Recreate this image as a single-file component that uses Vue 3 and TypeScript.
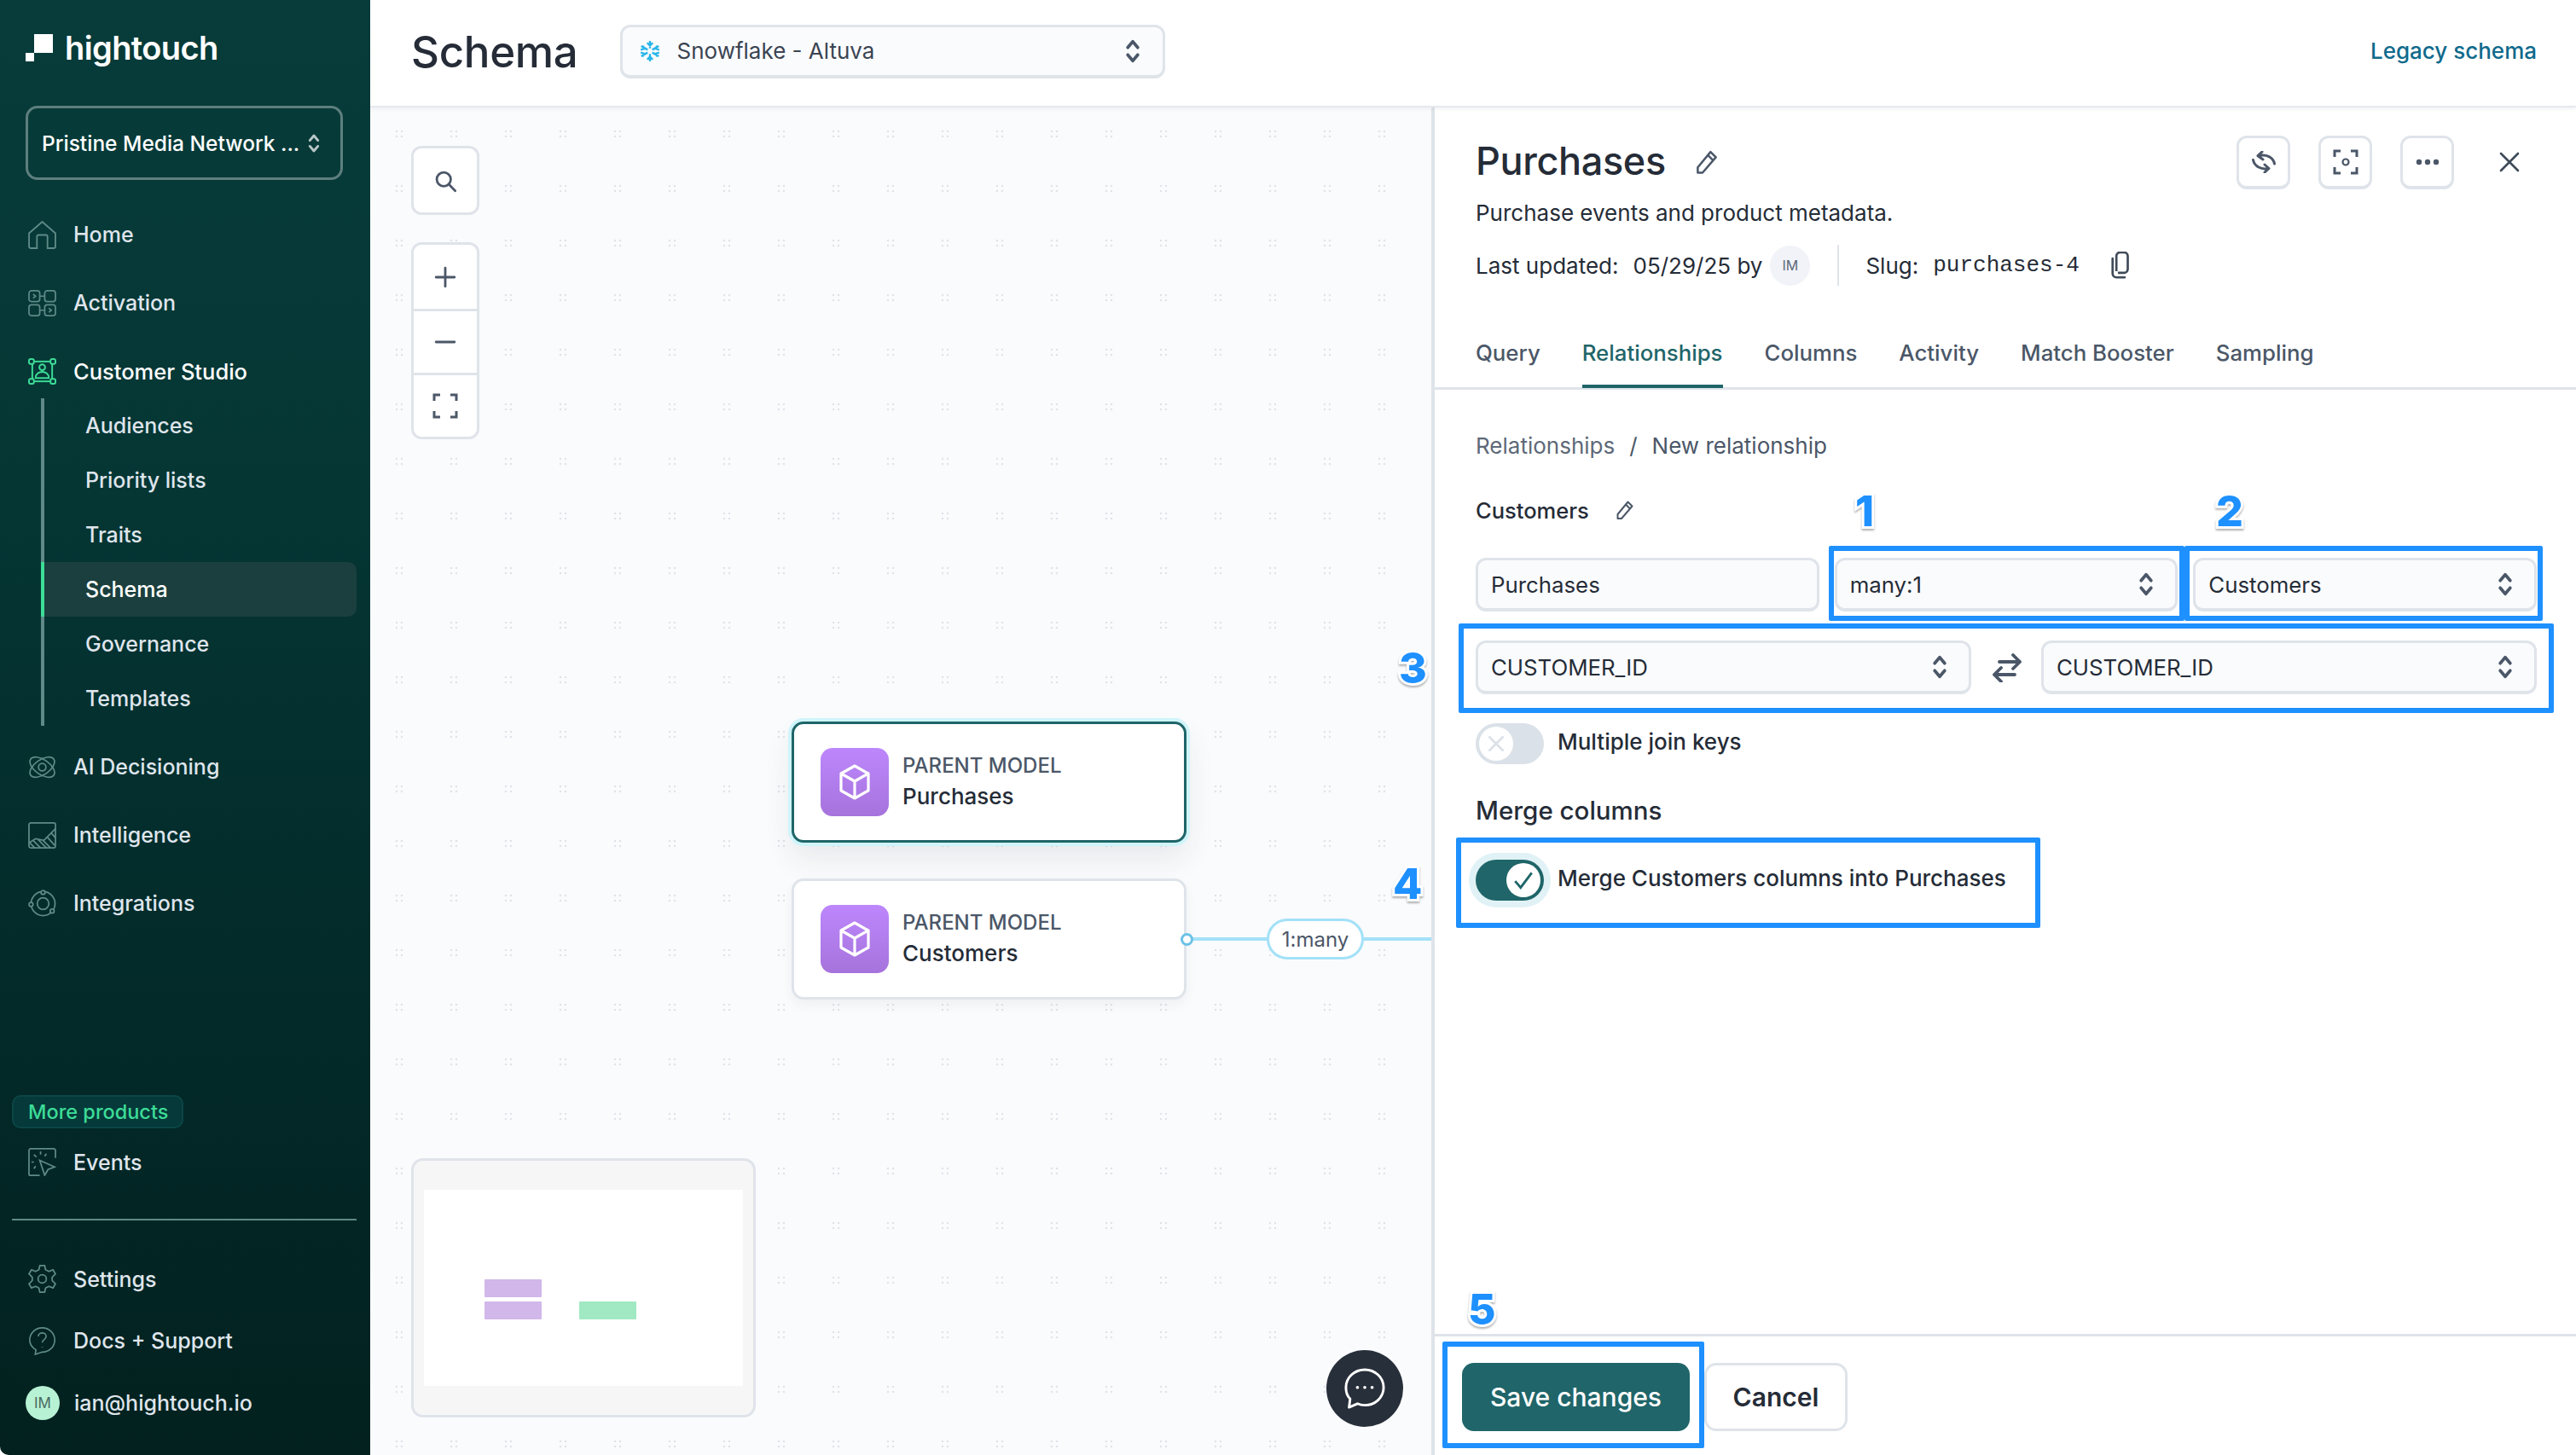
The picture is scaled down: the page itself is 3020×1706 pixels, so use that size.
<script setup lang="ts">
interface NavItem { label: string; icon: string; active?: boolean }
const topNav: NavItem[] = [
  { label: 'Home', icon: 'i-home' },
  { label: 'Activation', icon: 'i-activation' },
  { label: 'Customer Studio', icon: 'i-studio', active: true },
]
const subNav = ['Audiences', 'Priority lists', 'Traits', 'Schema', 'Governance', 'Templates']
const midNav: NavItem[] = [
  { label: 'AI Decisioning', icon: 'i-ai' },
  { label: 'Intelligence', icon: 'i-intel' },
  { label: 'Integrations', icon: 'i-integr' },
]
const tabs = ['Query', 'Relationships', 'Columns', 'Activity', 'Match Booster', 'Sampling']
const nodes = [
  { name: 'Purchases', cls: 'node-a' },
  { name: 'Customers', cls: 'node-b' },
]
const marks = [
  { text: '1', cls: 'm1' },
  { text: '2', cls: 'm2' },
  { text: '3', cls: 'm3' },
  { text: '4', cls: 'm4' },
  { text: '5', cls: 'm5' },
]
const boxes = ['b1', 'b2', 'b3', 'b4', 'b5']
</script>

<template>
  <div class="app">
    <svg class="defs" width="0" height="0" aria-hidden="true">
      <symbol id="updown" viewBox="0 0 16 28"><path d="M2.500 10 8 3.500 13.500 10M2.500 18 8 24.500 13.500 18" fill="none" stroke="currentColor" stroke-width="3.400" stroke-linecap="round" stroke-linejoin="round"/></symbol>
      <symbol id="pencil" viewBox="0 0 24 24"><path d="M15.500 2.500 20.500 7.500 8 22H3.500v-5zM13 5.500l5 5" fill="none" stroke="currentColor" stroke-width="2" stroke-linejoin="round"/></symbol>
      <symbol id="cube" viewBox="0 0 40 44"><path d="M20 3 36 12V32L20 41 4 32V12ZM4 12 20 21 36 12M20 21V41" fill="none" stroke="#fff" stroke-width="3.200" stroke-linejoin="round"/></symbol>
      <symbol id="i-home" viewBox="0 0 32 32"><path d="M1 14 16 1l15 13v15a2 2 0 0 1-2 2h-7V18a2 2 0 0 0-2-2h-8a2 2 0 0 0-2 2v13H3a2 2 0 0 1-2-2Z"/></symbol>
      <symbol id="i-activation" viewBox="0 0 34 32"><rect x="1" y="1" width="13" height="13" rx="3"/><rect x="20" y="1" width="13" height="13" rx="3"/><rect x="1" y="18" width="13" height="13" rx="3"/><rect x="20" y="18" width="13" height="13" rx="3"/><path d="M14 7.500h6M14 24.500h6M6 5l3 2.500L6 10M25 22l3 2.500-3 2.500"/></symbol>
      <symbol id="i-studio" viewBox="0 0 34 32"><rect x="5" y="4" width="24" height="24"/><rect x="1" y="1" width="6" height="6" rx="2" fill="#053a38"/><rect x="27" y="1" width="6" height="6" rx="2" fill="#053a38"/><rect x="1" y="25" width="6" height="6" rx="2" fill="#053a38"/><rect x="27" y="25" width="6" height="6" rx="2" fill="#053a38"/><circle cx="17" cy="11" r="3.500"/><path d="M9 24c0-10 16-10 16 0Z"/></symbol>
      <symbol id="i-ai" viewBox="0 0 34 32"><ellipse cx="17" cy="16" rx="17" ry="9" transform="rotate(35 17 16)"/><ellipse cx="17" cy="16" rx="17" ry="9" transform="rotate(-35 17 16)"/><circle cx="17" cy="16" r="4.500"/></symbol>
      <symbol id="i-intel" viewBox="0 0 34 32"><rect x="1" y="1" width="32" height="30" rx="2"/><path d="M1 25 9 20l10 2L33 8M2 25l6 6M6 22l9 9M12 21l10 10M18 22l9 9M23 18l9 10M28 13l5 6"/></symbol>
      <symbol id="i-integr" viewBox="0 0 34 32"><circle cx="18" cy="16" r="14.500"/><circle cx="18" cy="16" r="7"/><circle cx="18" cy="2.500" r="2.400" fill="#032c2b"/><circle cx="3.500" cy="17" r="2.400" fill="#032c2b"/><circle cx="29" cy="25" r="2.400" fill="#032c2b"/></symbol>
      <symbol id="i-events" viewBox="0 0 34 34"><path d="M33 12V3a2 2 0 0 0-2-2H3a2 2 0 0 0-2 2v29a1 1 0 0 0 1 1h12"/><path d="M14 15 32 23l-8 3-4 7ZM15 4v4M7 8l3 3M22 7l-2 3M4 17h3M7 25l2-3"/></symbol>
      <symbol id="i-gear" viewBox="0 0 34 34"><circle cx="17" cy="17" r="5"/><path d="M14 1h6l1 5 4 2 5-2 3 5-4 4v4l4 4-3 5-5-2-4 2-1 5h-6l-1-5-4-2-5 2-3-5 4-4v-4l-4-4 3-5 5 2 4-2Z" stroke-linejoin="round"/></symbol>
      <symbol id="i-docs" viewBox="0 0 34 36"><path d="M17 1c9 0 16 7 16 15.500S26 32 17 32l-9 3 1-6C4 26 1 22 1 16.500 1 8 8 1 17 1Z"/><path d="M12 12c0-6 10-6 10 0 0 4-5 4-5 8M17 25v1"/></symbol>
    </svg>

    <aside class="sidebar">
      <div class="logo">
        <span class="logo-mark"><i class="sq-big"></i><i class="sq-small"></i></span>
        <span class="logo-text">hightouch</span>
      </div>
      <div class="org">
        <span>Pristine Media Network ...</span>
        <svg class="org-chev"><use href="#updown" /></svg>
      </div>
      <nav class="nav">
        <div v-for="n in topNav" :key="n.label" class="nav-item" :class="{ on: n.active }">
          <svg class="nav-ic"><use :href="'#' + n.icon" /></svg>
          <span>{{ n.label }}</span>
        </div>
        <div class="sub">
          <div v-for="s in subNav" :key="s" class="sub-item" :class="{ on: s === 'Schema' }">{{ s }}</div>
        </div>
        <div class="mid">
          <div v-for="n in midNav" :key="n.label" class="nav-item">
            <svg class="nav-ic"><use :href="'#' + n.icon" /></svg>
            <span>{{ n.label }}</span>
          </div>
        </div>
      </nav>
      <div class="side-bottom">
        <div class="chip">More products</div>
        <div class="nav-item">
          <svg class="nav-ic"><use href="#i-events" /></svg>
          <span>Events</span>
        </div>
        <div class="side-rule"></div>
        <div class="nav-item short">
          <svg class="nav-ic"><use href="#i-gear" /></svg>
          <span>Settings</span>
        </div>
        <div class="nav-item short">
          <svg class="nav-ic"><use href="#i-docs" /></svg>
          <span>Docs + Support</span>
        </div>
        <div class="nav-item short">
          <span class="user-av">IM</span>
          <span>ian@hightouch.io</span>
        </div>
      </div>
    </aside>

    <main class="main">
      <header class="topbar">
        <h1 class="page-title">Schema</h1>
        <div class="source">
          <svg class="flake" viewBox="0 0 24 24"><path d="M12 1v8M12 15v8M2.500 6.500l7 4M14.500 13.500l7 4M21.500 6.500l-7 4M9.500 13.500l-7 4M9 3l3 3 3-3M9 21l3-3 3 3M2 10.500 5.500 9.500 4.500 6M22 10.500 18.500 9.500 19.500 6M2 13.500l3.500 1-1 3.500M22 13.500l-3.500 1 1 3.500" fill="none" stroke="#29b5e8" stroke-width="2.200"/></svg>
          <span>Snowflake - Altuva</span>
          <svg class="chev"><use href="#updown" /></svg>
        </div>
        <a class="legacy">Legacy schema</a>
      </header>

      <div class="work">
        <section class="canvas">
          <div class="ctrls">
            <div class="ctrl-box">
              <div class="ctrl tall">
                <svg viewBox="0 0 24 24" width="28" height="28"><circle cx="10.500" cy="10.500" r="7" fill="none" stroke="#4b5768" stroke-width="2.400"/><path d="M15.500 15.500 22 22" stroke="#4b5768" stroke-width="2.400" stroke-linecap="round"/></svg>
              </div>
            </div>
            <div class="ctrl-box">
              <div class="ctrl">
                <svg viewBox="0 0 24 24" width="26" height="26"><path d="M12 2v20M2 12h20" stroke="#4b5768" stroke-width="2.600" stroke-linecap="round"/></svg>
              </div>
              <div class="ctrl sep">
                <svg viewBox="0 0 24 24" width="26" height="26"><path d="M2 12h20" stroke="#4b5768" stroke-width="2.600" stroke-linecap="round"/></svg>
              </div>
              <div class="ctrl sep">
                <svg viewBox="0 0 30 30" width="30" height="30"><path d="M2 9V2h7M21 2h7v7M2 21v7h7M28 21v7h-7" fill="none" stroke="#4b5768" stroke-width="3"/></svg>
              </div>
            </div>
          </div>

          <div v-for="n in nodes" :key="n.name" class="node" :class="n.cls">
            <div class="node-ic"><svg width="40" height="44"><use href="#cube" /></svg></div>
            <div class="node-text">
              <div class="node-kind">PARENT MODEL</div>
              <div class="node-name">{{ n.name }}</div>
            </div>
          </div>
          <div class="edge"></div>
          <div class="handle"></div>
          <div class="pill">1:many</div>

          <div class="minimap">
            <div class="mini-view">
              <i class="mini p1"></i><i class="mini p2"></i><i class="mini g1"></i>
            </div>
          </div>

          <div class="chat">
            <svg viewBox="0 0 44 44" width="54" height="54"><path d="M22 4c10 0 18 7.500 18 17s-8 17-18 17c-3 0-5-.5-7-1.500L7 40l1-8c-3-3-4-7-4-11C4 11.500 12 4 22 4Z" fill="none" stroke="#fff" stroke-width="2.400" stroke-linejoin="round"/><circle cx="15" cy="21" r="1.500" fill="#fff"/><circle cx="22" cy="21" r="1.500" fill="#fff"/><circle cx="29" cy="21" r="1.500" fill="#fff"/></svg>
          </div>
        </section>

        <section class="panel">
          <div class="phead">
            <div class="title-row">
              <h2 class="ptitle">Purchases</h2>
              <svg class="pen-lg"><use href="#pencil" /></svg>
              <div class="pactions">
                <button class="icon-btn">
                  <svg viewBox="0 0 28 26" width="28" height="26"><path d="M26.500 15C25 7.500 17 3.500 8 5.700M12 1 7 5.700 13 10M1.500 10.500C3 18 11 22.500 19.500 20.500M15 16l5 4.500L15 25" fill="none" stroke="#4b5768" stroke-width="3" stroke-linecap="round" stroke-linejoin="round"/></svg>
                </button>
                <button class="icon-btn">
                  <svg viewBox="0 0 30 30" width="30" height="30"><path d="M2 9V2h7M21 2h7v7M2 21v7h7M28 21v7h-7" fill="none" stroke="#4b5768" stroke-width="3"/><circle cx="15" cy="15" r="3.500" fill="none" stroke="#4b5768" stroke-width="2.200"/></svg>
                </button>
                <button class="icon-btn">
                  <svg viewBox="0 0 30 10" width="30" height="10"><circle cx="5" cy="5" r="3.200" fill="#4b5768"/><circle cx="15" cy="5" r="3.200" fill="#4b5768"/><circle cx="25" cy="5" r="3.200" fill="#4b5768"/></svg>
                </button>
                <svg class="close" viewBox="0 0 24 24"><path d="M2 2l20 20M22 2 2 22" stroke="#3f4a59" stroke-width="2.600" stroke-linecap="round"/></svg>
              </div>
            </div>
            <p class="pdesc">Purchase events and product metadata.</p>
            <div class="pmeta">
              <span>Last updated:</span>
              <span class="pm-date">05/29/25 by</span>
              <span class="mini-av">IM</span>
              <span class="pm-sep"></span>
              <span>Slug:</span>
              <code class="slug">purchases-4</code>
              <svg class="copy" viewBox="0 0 28 36"><path d="M8 26V6a5 5 0 0 1 5-5h5a5 5 0 0 1 5 5v17a5 5 0 0 1-5 5H10" fill="none" stroke="#3f4a59" stroke-width="3"/><path d="M3 9v20a5 5 0 0 0 5 5h11" fill="none" stroke="#3f4a59" stroke-width="3" stroke-linecap="round"/></svg>
            </div>
          </div>

          <div class="tabs">
            <div v-for="t in tabs" :key="t" class="tab" :class="{ on: t === 'Relationships' }">{{ t }}</div>
          </div>

          <div class="pbody">
            <div class="crumbs"><span class="c-first">Relationships</span><span class="c-sep">/</span><span>New relationship</span></div>
            <div class="rel-name">
              <span>Customers</span>
              <svg class="pen-sm"><use href="#pencil" /></svg>
            </div>
            <div class="row3">
              <div class="field">Purchases</div>
              <div class="field">many:1<svg class="chev"><use href="#updown" /></svg></div>
              <div class="field">Customers<svg class="chev"><use href="#updown" /></svg></div>
            </div>
            <div class="row2">
              <div class="field">CUSTOMER_ID<svg class="chev"><use href="#updown" /></svg></div>
              <svg class="swap" viewBox="0 0 36 34"><path d="M9 10H33M25 2l8 8-8 8M27 25H3M11 17l-8 8 8 8" fill="none" stroke="#4b5768" stroke-width="3.800" stroke-linecap="round" stroke-linejoin="round"/></svg>
              <div class="field">CUSTOMER_ID<svg class="chev"><use href="#updown" /></svg></div>
            </div>
            <div class="switch-row off-row">
              <span class="switch off">
                <span class="knob"><svg viewBox="0 0 20 20" width="22" height="22"><path d="M3 3l14 14M17 3 3 17" stroke="#dbe1e8" stroke-width="2.400" stroke-linecap="round"/></svg></span>
              </span>
              <span class="sw-label">Multiple join keys</span>
            </div>
            <h3 class="merge-title">Merge columns</h3>
            <div class="switch-row">
              <span class="switch on">
                <span class="knob"><svg viewBox="0 0 24 24" width="26" height="26"><path d="M3 13l6 7L21 4" fill="none" stroke="#1f6569" stroke-width="2.600"/></svg></span>
              </span>
              <span class="sw-label">Merge Customers columns into Purchases</span>
            </div>
          </div>

          <footer class="pfoot">
            <button class="save">Save changes</button>
            <button class="cancel">Cancel</button>
          </footer>
        </section>
      </div>
    </main>

    <div v-for="b in boxes" :key="b" class="callout" :class="b"></div>
    <span v-for="m in marks" :key="m.text" class="mark" :class="m.cls">{{ m.text }}</span>
  </div>
</template>

<style>
html, body { margin: 0; padding: 0; background: #fff; }
</style>

<style scoped>
* { box-sizing: border-box; }
.defs { position: absolute; }
.app {
  position: relative;
  display: flex;
  width: 3020px;
  height: 1706px;
  overflow: hidden;
  background: #fff;
  font-family: Inter, "Noto Sans", sans-serif;
  color: #252c37;
}

/* sidebar */
.sidebar {
  width: 434px;
  flex: none;
  height: 100%;
  display: flex;
  flex-direction: column;
  background: linear-gradient(180deg, #073c3a 0%, #053634 35%, #032c2b 62%, #02211f 100%);
  color: #dfe5ec;
  border-bottom-left-radius: 10px;
}
.logo { display: flex; align-items: center; height: 40px; margin: 36px 0 0 30px; gap: 14px; }
.logo-mark { position: relative; width: 32px; height: 32px; }
.sq-big { position: absolute; left: 10px; top: 0; width: 22px; height: 22px; background: #fff; }
.sq-small { position: absolute; left: 0; top: 22px; width: 10px; height: 10px; background: #fff; }
.logo-text { font-size: 38px; font-weight: 600; color: #fff; letter-spacing: -0.6px; line-height: 40px; }
.org {
  margin: 48px 32px 0 30px;
  height: 87px;
  border: 3px solid #5d7f7e;
  border-radius: 14px;
  display: flex;
  align-items: center;
  justify-content: space-between;
  padding: 0 23px 0 16px;
  color: #fff;
  font-size: 24.500px;
  font-weight: 500;
  white-space: nowrap;
}
.org-chev { width: 16px; height: 24px; color: #b9c7c8; }
.nav { margin-top: 24px; display: flex; flex-direction: column; }
.nav-item {
  height: 80px;
  display: flex;
  align-items: center;
  gap: 20px;
  padding-left: 33px;
  font-size: 25px;
  font-weight: 500;
  color: #dfe5ec;
}
.nav-item.on { color: #fff; font-size: 25.500px; }
.nav-item.short { height: 72.500px; }
.nav-ic { width: 33px; height: 33px; flex: none; fill: none; stroke: #5f8a87; stroke-width: 1.800; }
.nav-item.on .nav-ic { stroke: #3ddc97; stroke-width: 2; }
.sub { margin: -8px 0 0 48px; border-left: 4px solid #5f8a87; width: 370px; }
.sub-item {
  height: 64px;
  line-height: 64px;
  padding-left: 48px;
  font-size: 25px;
  font-weight: 500;
  color: #dfe5ec;
  position: relative;
}
.sub-item.on {
  color: #fff;
  background: #1b3f3e;
  border-radius: 0 10px 10px 0;
}
.sub-item.on::before {
  content: "";
  position: absolute;
  left: -4px;
  top: 0;
  bottom: 0;
  width: 4px;
  background: #3ddc97;
}
.mid { margin-top: 8px; }
.side-bottom { margin-top: auto; padding-bottom: 25px; display: flex; flex-direction: column; }
.chip {
  align-self: flex-start;
  margin-left: 14px;
  height: 39px;
  line-height: 35px;
  padding: 0 16px 0 17px;
  border: 2px solid #0b4645;
  background: #05393a;
  border-radius: 10px;
  color: #3ddc97;
  font-size: 23.500px;
  font-weight: 500;
}
.side-rule { margin: 26px 16px 33px 14px; height: 2px; background: #5f8a87; }
.user-av {
  width: 40px;
  height: 40px;
  margin-left: -3px;
  margin-right: -3px;
  border-radius: 50%;
  background: #b8f2d5;
  color: #4a6a62;
  display: flex;
  align-items: center;
  justify-content: center;
  font-size: 17px;
  font-weight: 400;
  flex: none;
}

/* main */
.main { flex: 1; display: flex; flex-direction: column; min-width: 0; }
.topbar {
  height: 126px;
  flex: none;
  display: flex;
  align-items: center;
  padding: 0 46px 4px 48px;
  border-bottom: 2px solid #e6e9ee;
  box-shadow: 0 2px 4px rgba(30, 40, 60, .06);
  position: relative;
  z-index: 2;
  background: #fff;
}
.page-title { margin: 0; font-size: 51px; font-weight: 500; color: #252c37; letter-spacing: -.3px; }
.source {
  margin-left: 50px;
  width: 639px;
  height: 63px;
  border: 3px solid #dfe4ea;
  border-bottom-width: 4px;
  border-radius: 12px;
  background: #fafbfd;
  display: flex;
  align-items: center;
  padding: 0 26px 0 19px;
  font-size: 26px;
  color: #3a4452;
}
.flake { width: 26px; height: 26px; margin-right: 18px; }
.chev { width: 18px; height: 30px; margin-left: auto; color: #4b5768; flex: none; }
.legacy { margin-left: auto; margin-bottom: 2px; font-size: 26px; font-weight: 500; color: #0f6a8c; }

.work { flex: 1; display: flex; min-height: 0; }
.canvas {
  position: relative;
  width: 1244px;
  flex: none;
  background-color: #fafbfd;
  background-image:
    radial-gradient(circle, #dfe3e8 1.300px, transparent 1.600px),
    radial-gradient(circle, #dfe3e8 1.300px, transparent 1.600px),
    radial-gradient(circle, #dfe3e8 1.300px, transparent 1.600px),
    radial-gradient(circle, #dfe3e8 1.300px, transparent 1.600px);
  background-size: 64px 64px;
  background-position: -1px -4px, 5px -4px, -1px 2px, 5px 2px;
}
.ctrls { position: absolute; left: 48px; top: 45px; display: flex; flex-direction: column; gap: 32px; }
.ctrl-box {
  width: 80px;
  background: #fff;
  border: 3px solid #dfe4ea;
  border-radius: 12px;
  overflow: hidden;
}
.ctrl { height: 75px; display: flex; align-items: center; justify-content: center; }
.ctrl.tall { height: 75px; }
.ctrl.sep { border-top: 3px solid #dfe4ea; }
.node {
  position: absolute;
  left: 494px;
  width: 463px;
  height: 142px;
  background: #fff;
  border: 3px solid #dfe4ea;
  border-radius: 14px;
  display: flex;
  align-items: center;
  padding-left: 31px;
  gap: 17px;
  box-shadow: 0 6px 14px rgba(30, 40, 60, .05);
}
.node-a {
  top: 720px;
  border-color: #1f6569;
  box-shadow: 0 0 0 4px #cff5fb, 0 18px 34px rgba(30, 40, 60, .09);
}
.node-b { top: 904px; }
.node-ic {
  width: 80px;
  height: 80px;
  border-radius: 14px;
  background: linear-gradient(180deg, #bd87fc, #a673dc);
  display: flex;
  align-items: center;
  justify-content: center;
}
.node-text { margin-top: -3px; margin-left: -1px; }
.node-kind { font-size: 24px; font-weight: 500; color: #4b5768; line-height: 36px; }
.node-name { font-size: 26px; font-weight: 500; color: #252c37; line-height: 36px; }
.edge { position: absolute; left: 957px; right: 0; top: 973px; height: 4px; background: #a3e1f8; }
.handle {
  position: absolute;
  left: 950px;
  top: 968px;
  width: 15px;
  height: 15px;
  border-radius: 50%;
  background: #fff;
  border: 3px solid #6cc2e6;
}
.pill {
  position: absolute;
  left: 1051px;
  top: 951px;
  width: 114px;
  height: 48px;
  border: 3px solid #a3e1f8;
  border-radius: 24px;
  background: #fff;
  color: #4b5768;
  font-size: 24px;
  display: flex;
  align-items: center;
  justify-content: center;
}
.minimap {
  position: absolute;
  left: 48px;
  top: 1232px;
  width: 404px;
  height: 304px;
  background: #f6f6f6;
  border: 3px solid #dfe4ea;
  border-radius: 14px;
  padding: 34px 12px 0;
}
.mini-view { position: relative; height: 230px; background: #fff; }
.mini { position: absolute; width: 67px; height: 21px; border-radius: 1px; }
.mini.p1 { left: 71px; top: 105px; background: #d1b7ea; }
.mini.p2 { left: 71px; top: 131px; background: #d1b7ea; }
.mini.g1 { left: 182px; top: 131px; background: #a0e9c3; }
.chat {
  position: absolute;
  left: 1121px;
  top: 1457px;
  width: 90px;
  height: 90px;
  border-radius: 50%;
  background: #272f3a;
  display: flex;
  align-items: center;
  justify-content: center;
}

/* panel */
.panel {
  flex: 1;
  min-width: 0;
  display: flex;
  flex-direction: column;
  border-left: 4px solid #dfe4ea;
  background: #fff;
}
.phead { padding: 33px 47px 0 48px; }
.title-row { display: flex; align-items: center; height: 63px; }
.ptitle { margin: -4px 0 0; font-size: 45px; font-weight: 500; color: #252c37; letter-spacing: -.35px; }
.pen-lg { width: 30px; height: 30px; margin-left: 33px; margin-top: -2px; color: #4b5768; }
.pactions { margin-left: auto; display: flex; align-items: center; gap: 33px; }
.icon-btn {
  width: 63px;
  height: 63px;
  padding: 0;
  background: #fff;
  border: 3px solid #dfe4ea;
  border-bottom-width: 4px;
  border-radius: 12px;
  display: flex;
  align-items: center;
  justify-content: center;
}
.close { width: 24px; height: 24px; margin: -2px 19px 0 20px; }
.pdesc { margin: 10px 0 0; line-height: 36px; font-size: 26px; color: #252c37; }
.pmeta { margin-top: 19px; height: 48px; display: flex; align-items: center; font-size: 26px; color: #252c37; }
.pm-date { margin-left: 17px; }
.mini-av {
  width: 47px;
  height: 47px;
  margin-left: 9px;
  border-radius: 50%;
  background: #f1f3f8;
  color: #5d6978;
  font-size: 16px;
  display: flex;
  align-items: center;
  justify-content: center;
}
.pm-sep { width: 2px; height: 48px; margin: 0 31px 0 32px; background: #dfe4ea; }
.slug { margin-left: 17px; font-family: "Liberation Mono", monospace; font-size: 26px; color: #252c37; }
.copy { width: 27px; height: 32px; margin-left: 35px; }
.tabs {
  margin-top: 46px;
  height: 76px;
  display: flex;
  gap: 49px;
  padding-left: 48px;
  border-bottom: 3px solid #dfe4ea;
}
.tab {
  height: 74px;
  line-height: 66px;
  font-size: 25.800px;
  font-weight: 500;
  color: #4b5768;
  border-bottom: 4px solid transparent;
}
.tab.on { color: #1f6569; border-bottom-color: #1f6569; }
.pbody { padding: 0 46px 0 48px; flex: 1; font-size: 25.800px; }
.crumbs { margin-top: 48px; line-height: 36px; display: flex; color: #4b5768; font-size: 26px; }
.c-first { color: #5d6978; }
.c-sep { margin: 0 17px; }
.rel-name { margin-top: 39px; height: 36px; display: flex; align-items: center; font-weight: 500; color: #252c37; font-size: 25.500px; }
.pen-sm { width: 24px; height: 24px; margin-left: 30px; color: #4b5768; }
.row3 { margin-top: 38px; display: grid; grid-template-columns: repeat(3, 1fr); gap: 18px; }
.row2 { margin-top: 34px; display: flex; align-items: center; }
.row2 .field { flex: 1; }
.swap { width: 36px; height: 34px; margin: 0 22px 0 24px; flex: none; }
.field {
  height: 63px;
  border: 3px solid #dfe4ea;
  border-bottom-width: 4px;
  border-radius: 12px;
  background: #fafbfd;
  display: flex;
  align-items: center;
  padding: 0 25px 0 15px;
  font-size: 25.800px;
  color: #252c37;
}
.switch-row { display: flex; align-items: center; gap: 16px; font-size: 26px; font-weight: 500; color: #252c37; margin-top: 36px; height: 48px; }
.sw-label { margin-top: -5px; }
.off-row { margin-top: 34px; }
.switch { position: relative; width: 80px; height: 48px; border-radius: 24px; display: block; flex: none; }
.switch.off { background: #dbe1e8; }
.switch.on { background: #1f6569; box-shadow: 0 0 0 8px #e0f2f5; }
.knob {
  position: absolute;
  top: 4px;
  width: 40px;
  height: 40px;
  border-radius: 50%;
  background: #fff;
  display: flex;
  align-items: center;
  justify-content: center;
}
.off .knob { left: 4px; }
.on .knob { right: 4px; }
.merge-title { margin: 34px 0 0; line-height: 40px; font-size: 29.500px; font-weight: 500; color: #252c37; }
.switch-row:not(.off-row) { margin-top: 38px; }
.pfoot {
  height: 142px;
  flex: none;
  border-top: 3px solid #dfe4ea;
  padding: 31px 0 0 32px;
  display: flex;
  align-items: flex-start;
  gap: 17px;
}
.save, .cancel {
  height: 80px;
  border-radius: 14px;
  font-family: inherit;
  font-size: 30px;
  font-weight: 600;
}
.save { width: 267px; background: #1f6569; color: #fff; border: 0; font-weight: 500; }
.cancel { width: 168px; background: #fff; color: #252c37; border: 3px solid #dfe4ea; }

/* annotations */
.callout { position: absolute; border: 6px solid #1e90ff; border-radius: 2px; pointer-events: none; z-index: 3; }
.b1 { left: 2144px; top: 640px; width: 417px; height: 88px; }
.b2 { left: 2561px; top: 640px; width: 420px; height: 88px; }
.b3 { left: 1710px; top: 731px; width: 1284px; height: 105px; }
.b4 { left: 1707px; top: 982px; width: 685px; height: 106px; }
.b5 { left: 1691px; top: 1573px; width: 307px; height: 125px; }
.mark {
  position: absolute;
  z-index: 4;
  font-size: 50px;
  line-height: 50px;
  font-weight: 800;
  color: #1e90ff;
  -webkit-text-stroke: 6px #fff;
  paint-order: stroke fill;
  filter: drop-shadow(0 2px 1px rgba(0, 0, 0, .3));
}
.m1 { left: 2175px; top: 574px; }
.m2 { left: 2598px; top: 574px; }
.m3 { left: 1640px; top: 758px; }
.m4 { left: 1633px; top: 1011px; }
.m5 { left: 1721px; top: 1510px; }
</style>
